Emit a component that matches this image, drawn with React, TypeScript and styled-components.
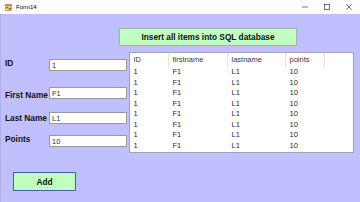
import React from "react";
import styled, { createGlobalStyle } from "styled-components";

const Global = createGlobalStyle`
  html, body { margin: 0; padding: 0; background: #ffffff; }
  body { width: 360px; height: 202px; overflow: hidden; font-family: "Liberation Sans", Arial, sans-serif; }
  * { box-sizing: border-box; }
`;

const Window = styled.div`
  width: 360px;
  height: 202px;
  display: flex;
  flex-direction: column;
`;

const TitleBar = styled.div`
  height: 14px;
  background: #ffffff;
  display: flex;
  align-items: center;
  padding-left: 5px;
  flex-shrink: 0;
`;

const TitleText = styled.span`
  font-family: "Liberation Sans", Arial, sans-serif;
  font-size: 6px;
  color: #000;
  margin-left: 4px;
  flex: 1;
`;

const Controls = styled.div`
  display: flex;
  align-items: center;
  height: 100%;
`;

const ControlBtn = styled.div`
  width: 22px;
  height: 14px;
  display: flex;
  align-items: center;
  justify-content: center;
`;

const Content = styled.div`
  flex: 1;
  background: #c0c0ff;
  display: flex;
  flex-direction: column;
  padding-top: 14px;
  border-left: 1px solid #b0b0e8;
`;

const InsertButton = styled.div`
  margin-left: 118px;
  width: 178px;
  height: 18px;
  background: #c0ffc0;
  border: 1px solid #a8b0a8;
  display: flex;
  align-items: center;
  justify-content: center;
  font-weight: bold;
  font-size: 8.3px;
  color: #111;
`;

const Main = styled.div`
  display: flex;
  margin-top: 6px;
`;

const FormCol = styled.div`
  width: 128px;
  display: flex;
  flex-direction: column;
  padding-left: 4px;
`;

const Field = styled.div<{ $top: number; $shift: number }>`
  display: flex;
  align-items: center;
  height: 12px;
  margin-top: ${(p) => p.$top}px;
  & > span {
    transform: translateY(${(p) => p.$shift}px);
  }
`;

const Label = styled.span`
  width: 44px;
  font-weight: bold;
  font-size: 8.3px;
  color: #111;
  white-space: nowrap;
`;

const TextBox = styled.div`
  width: 78px;
  height: 12px;
  background: #fff;
  border: 1px solid #9a9a9a;
  display: flex;
  align-items: center;
  padding-left: 2px;
  font-size: 7.5px;
  color: #333;
`;

const Grid = styled.div`
  width: 225px;
  height: 101px;
  background: #fff;
  border: 1px solid #a0a0b8;
  display: flex;
  flex-direction: column;
`;

const Row = styled.div<{ $h: number; $header?: boolean }>`
  display: grid;
  grid-template-columns: 39px 59px 58px 39px;
  height: ${(p) => p.$h}px;
  align-items: center;
  font-size: 7.5px;
  color: ${(p) => (p.$header ? "#3a3a3a" : "#2a2a2a")};
`;

const Cell = styled.div<{ $sep?: boolean }>`
  padding-left: 3.5px;
  height: 100%;
  display: flex;
  align-items: center;
  border-right: ${(p) => (p.$sep ? "1px solid #e4e4e4" : "none")};
  white-space: nowrap;
`;

const AddButton = styled.div`
  margin-top: 19px;
  margin-left: 12px;
  width: 63px;
  height: 19px;
  background: #c0ffc0;
  border: 1px solid #3c64b4;
  display: flex;
  align-items: center;
  justify-content: center;
  font-weight: bold;
  font-size: 8.3px;
  color: #111;
`;

const fields = [
  { label: "ID", value: "1", top: 7, shift: -2 },
  { label: "First Name", value: "F1", top: 16, shift: 1.5 },
  { label: "Last Name", value: "L1", top: 13, shift: 0 },
  { label: "Points", value: "10", top: 11, shift: -2 },
];

const headers = ["ID", "firstname", "lastname", "points"];
const rows = Array.from({ length: 8 }, () => ["1", "F1", "L1", "10"]);

const AppIcon = () => (
  <svg width="7" height="7" viewBox="0 0 7 7">
    <rect x="0.5" y="0.5" width="6" height="6" fill="#f4e2a0" stroke="#a07a30" strokeWidth="0.6" />
    <rect x="0.5" y="0.5" width="6" height="1.6" fill="#d08030" />
    <rect x="1.3" y="2.8" width="2" height="1.6" fill="#4070c0" />
    <rect x="3.8" y="3.8" width="2" height="2" fill="#c04040" />
  </svg>
);

export default function App() {
  return (
    <>
      <Global />
      <Window>
        <TitleBar>
          <AppIcon />
          <TitleText>Form14</TitleText>
          <Controls>
            <ControlBtn>
              <svg width="6" height="6" viewBox="0 0 6 6">
                <line x1="0" y1="3" x2="6" y2="3" stroke="#333" strokeWidth="0.7" />
              </svg>
            </ControlBtn>
            <ControlBtn>
              <svg width="6" height="6" viewBox="0 0 6 6">
                <rect x="0.5" y="0.5" width="5" height="5" fill="none" stroke="#333" strokeWidth="0.7" />
              </svg>
            </ControlBtn>
            <ControlBtn>
              <svg width="6" height="6" viewBox="0 0 6 6">
                <line x1="0.3" y1="0.3" x2="5.7" y2="5.7" stroke="#333" strokeWidth="0.7" />
                <line x1="5.7" y1="0.3" x2="0.3" y2="5.7" stroke="#333" strokeWidth="0.7" />
              </svg>
            </ControlBtn>
          </Controls>
        </TitleBar>
        <Content>
          <InsertButton>Insert all items into SQL database</InsertButton>
          <Main>
            <FormCol>
              {fields.map((f) => (
                <Field key={f.label} $top={f.top} $shift={f.shift}>
                  <Label>{f.label}</Label>
                  <TextBox>{f.value}</TextBox>
                </Field>
              ))}
            </FormCol>
            <Grid>
              <Row $h={13.5} $header>
                {headers.map((h) => (
                  <Cell key={h} $sep>
                    {h}
                  </Cell>
                ))}
              </Row>
              {rows.map((r, i) => (
                <Row key={i} $h={10.5}>
                  {r.map((c, j) => (
                    <Cell key={j}>{c}</Cell>
                  ))}
                </Row>
              ))}
            </Grid>
          </Main>
          <AddButton>Add</AddButton>
        </Content>
      </Window>
    </>
  );
}
